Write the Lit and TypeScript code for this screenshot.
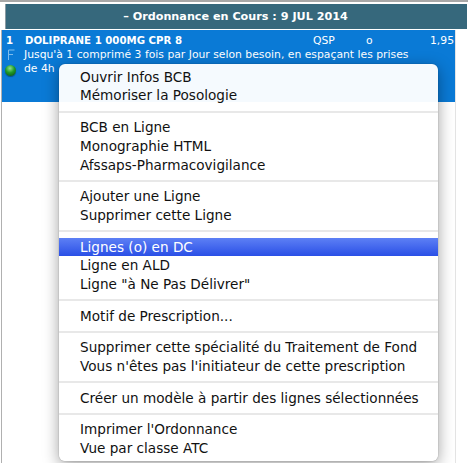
import { LitElement, html, css } from "lit";
import { customElement } from "lit/decorators.js";

const groups: { t: string; on?: boolean }[][] = [
  [{ t: "Ouvrir Infos BCB" }, { t: "Mémoriser la Posologie" }],
  [{ t: "BCB en Ligne" }, { t: "Monographie HTML" }, { t: "Afssaps-Pharmacovigilance" }],
  [{ t: "Ajouter une Ligne" }, { t: "Supprimer cette Ligne" }],
  [{ t: "Lignes (o) en DC", on: true }, { t: "Ligne en ALD" }, { t: 'Ligne "à Ne Pas Délivrer"' }],
  [{ t: "Motif de Prescription..." }],
  [{ t: "Supprimer cette spécialité du Traitement de Fond" }, { t: "Vous n'êtes pas l'initiateur de cette prescription" }],
  [{ t: "Créer un modèle à partir des lignes sélectionnées" }],
  [{ t: "Imprimer l'Ordonnance" }, { t: "Vue par classe ATC" }],
];

@customElement("app-root")
export class AppRoot extends LitElement {
  static styles = css`
    :host { display: block; width: 468px; height: 463px; position: relative; overflow: hidden; background: #fff;
      font-family: "DejaVu Sans", sans-serif; }
    .frame { height: 463px; box-sizing: border-box; border-top: 2px solid #a8a8a8; display: flex; flex-direction: column; }
    .top { height: 28px; flex: none; box-sizing: border-box; padding: 2px 1px 0 5px; }
    .head { height: 25px; background: #36687c; color: #fff; font-weight: bold; font-size: 11.2px; display: flex; align-items: center; justify-content: center; padding-right: 2px; border-left: 1px solid #8a9aa2; box-sizing: border-box; }
    .pane { flex: 1; width: 453px; margin-left: 1px; border-left: 1px solid #b0b0b0; border-right: 1px solid #e4e4e4; box-sizing: content-box; }
    .rx { height: 72px; background: #0a7ad6; color: #fff; font-size: 10.8px; position: relative; }
    .l1 { display: flex; height: 19px; align-items: center; font-weight: bold; font-size: 10.2px; padding-top: 1px; box-sizing: border-box; }
    .l1 .n { width: 23px; padding-left: 4px; box-sizing: border-box; }
    .l1 .name { width: 288px; }
    .l1 .q { width: 53px; font-weight: normal; font-size: 10.8px; }
    .l1 .o { width: 64px; font-weight: normal; font-size: 10.8px; }
    .l1 .p { font-weight: normal; font-size: 10.8px; }
    .txt { padding-left: 22px; margin-top: -1px; line-height: 14px; white-space: nowrap; }
    .flag { position: absolute; left: 5px; top: 19px; }
    .ball { position: absolute; left: 3px; top: 35px; width: 11px; height: 11px; border-radius: 50%; background: radial-gradient(circle at 45% 30%, #8fe08f, #1f9a28 45%, #0a4512); box-shadow: 0 1px 1px rgba(0,0,0,.35); }
    .menu { position: absolute; left: 59px; top: 64px; width: 379px; height: 397px; background: rgba(255,255,255,.96); border-radius: 6px; box-shadow: 0 4px 16px rgba(0,0,0,.38), 0 0 1px rgba(0,0,0,.55); padding-top: 3.8px; box-sizing: border-box; color: #111; font-size: 13.6px; }
    .item { height: 18.7px; line-height: 18.7px; padding-left: 21px; white-space: nowrap; }
    .item.on { background: linear-gradient(#5d80f5, #2a4fe6); color: #fff; }
    .sep { height: 2px; background: #e8e8e8; margin: 5.5px 0 5.5px; }
  `;
  render() {
    return html`
      <div class="frame">
        <div class="top"><div class="head">– Ordonnance en Cours : 9 JUL 2014</div></div>
        <div class="pane">
          <div class="rx">
            <div class="l1"><span class="n">1</span><span class="name">DOLIPRANE 1 000MG CPR 8</span><span class="q">QSP</span><span class="o">o</span><span class="p">1,95</span></div>
            <div class="txt">Jusqu'à 1 comprimé 3 fois par Jour selon besoin, en espaçant les prises<br />de 4h</div>
            <svg class="flag" width="8" height="11" viewBox="0 0 8 11" fill="none" stroke="#7fbdec"><path d="M1.5 11V1H7.5M1.5 5.5H6" /></svg>
            <span class="ball"></span>
          </div>
        </div>
      </div>
      <div class="menu">
        ${groups.map((g, i) => html`${i ? html`<div class="sep"></div>` : ""}${g.map((it) => html`<div class="item ${it.on ? "on" : ""}">${it.t}</div>`)}`)}
      </div>
    `;
  }
}
